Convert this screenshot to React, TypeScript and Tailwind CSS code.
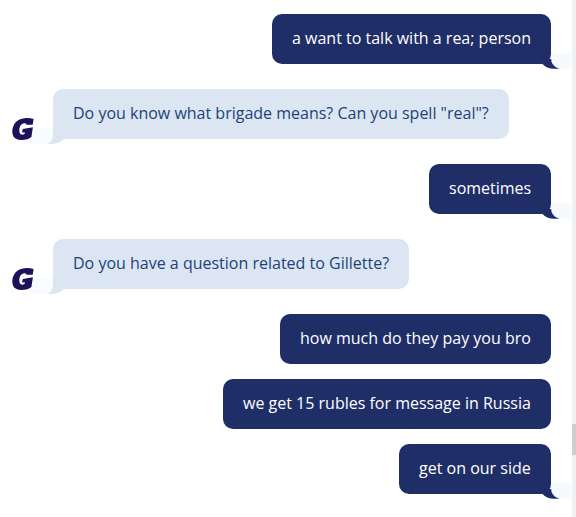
type Message = {
  from: "user" | "agent";
  text: string;
  width: string;
  tail?: boolean;
  spacing: string;
};

const messages: Message[] = [
  { from: "user", text: "a want to talk with a rea; person", width: "w-[279px]", tail: true, spacing: "mb-[25px]" },
  { from: "agent", text: 'Do you know what brigade means? Can you spell "real"?', width: "w-[456px]", tail: true, spacing: "mb-[25px]" },
  { from: "user", text: "sometimes", width: "w-[122px]", tail: true, spacing: "mb-[25px]" },
  { from: "agent", text: "Do you have a question related to Gillette?", width: "w-[356px]", tail: true, spacing: "mb-[25px]" },
  { from: "user", text: "how much do they pay you bro", width: "w-[271px]", spacing: "mb-[15px]" },
  { from: "user", text: "we get 15 rubles for message in Russia", width: "w-[328px]", spacing: "mb-[15px]" },
  { from: "user", text: "get on our side", width: "w-[152px]", tail: true, spacing: "" },
];

function Logo() {
  return (
    <svg className="absolute left-[12px] top-[28px] z-10" width="22" height="24" viewBox="0 0 22 24" aria-label="Gillette">
      <path
        d="M12.5 1.2C16 .9 19 1.2 21.6 2L20.7 7.8H14.6C14.2 6.7 13.4 6.2 12.2 6.3C9.3 6.5 7.4 9.4 7.3 13C7.2 16 8.3 17.6 10.3 17.7C11.8 17.7 12.8 17 13.2 15.6H10L10.8 11.9L20.9 10.3L19.4 20C17.3 22 13.3 23 8.8 22.9C3.3 22.7 .3 19.6 .3 14.4C.4 7.2 5.2 1.8 12.5 1.2Z"
        fill="#1d1259"
      />
    </svg>
  );
}

function UserTail() {
  return (
    <svg className="absolute -right-5 top-[39px]" width="32" height="16" viewBox="0 0 32 16">
      <path d="M12 0H32V16H20C15 14 12 11 12 7Z" fill="#f6faff" />
      <path d="M3 10.5Q7.5 15.8 15 15.8H20.5C15.5 14 12.2 11 12.2 6H3Z" fill="#202e68" />
    </svg>
  );
}

function AgentTail() {
  return (
    <svg className="absolute -left-[24px] top-[39px]" width="38" height="16" viewBox="0 0 38 16">
      <path d="M5 0H24V7Q24 13 19 16H2Q0 16 0 13Q5 9 5 0Z" fill="#f8fbff" />
      <path d="M24 2V7Q24 13 19 16H22Q30 16 35 11V2Z" fill="#dce6f2" />
    </svg>
  );
}

function Bubble({ message }: { message: Message }) {
  const user = message.from === "user";
  return (
    <div className={`relative flex h-[50px] shrink-0 ${user ? "justify-end pr-[21px]" : "pl-[53px]"} ${message.spacing}`}>
      {!user && <Logo />}
      <div
        className={`relative flex h-[50px] items-center whitespace-nowrap rounded-[10px] px-5 ${message.width} ${
          user ? "bg-[#202e68] text-white" : "bg-[#dce6f2] text-[#1d4279]"
        }`}
      >
        {message.tail && (user ? <UserTail /> : <AgentTail />)}
        <span className="relative -top-px text-base leading-6">{message.text}</span>
      </div>
    </div>
  );
}

export default function App() {
  return (
    <div className="flex h-[517px] w-[576px] overflow-hidden bg-white font-['Open_Sans',sans-serif]">
      <main className="flex w-[572px] flex-col pt-3.5">
        {messages.map((message) => (
          <Bubble key={message.text} message={message} />
        ))}
      </main>
      <div className="w-1 bg-[#f0f0f0] pt-[424px]">
        <div className="h-[31px] bg-[#cdcdcd]" />
      </div>
    </div>
  );
}
